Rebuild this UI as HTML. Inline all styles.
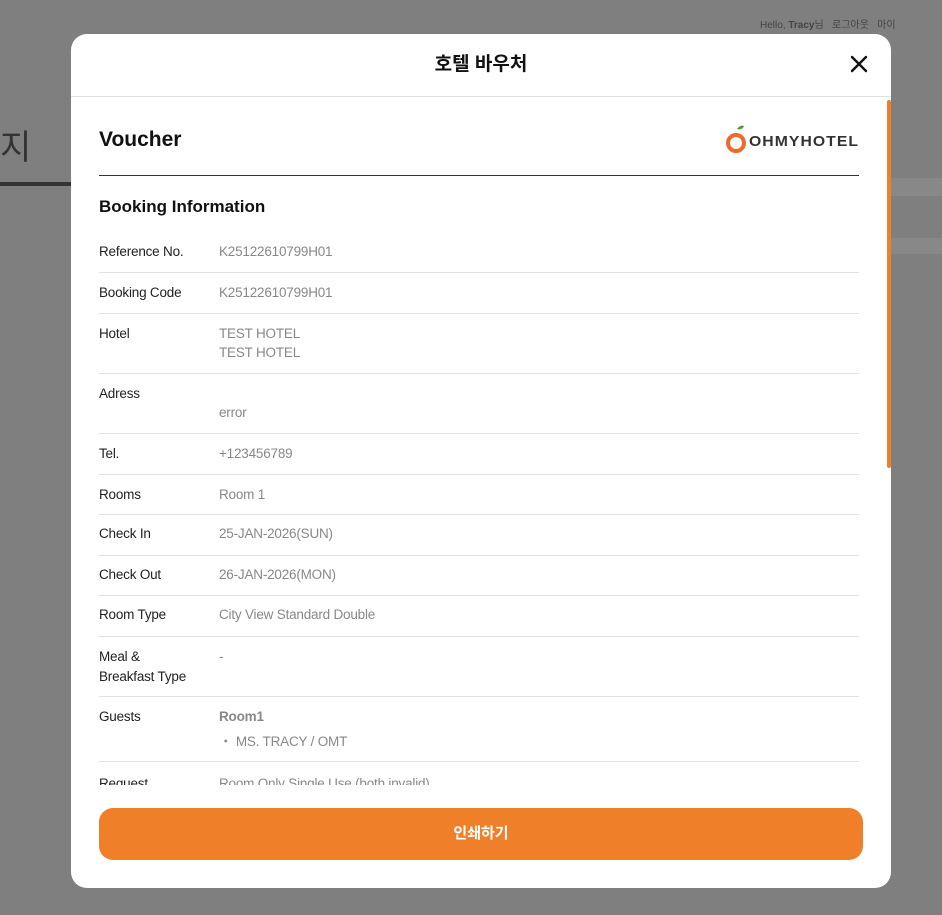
<!DOCTYPE html>
<html><head><meta charset="utf-8"><style>
*{margin:0;padding:0;box-sizing:border-box}
body{width:942px;height:915px;background:#7f7f7f;font-family:"Liberation Sans","Noto Sans CJK KR",sans-serif;position:relative;overflow:hidden}
.bg{position:absolute;background:#777}
.modal{position:absolute;left:71px;top:34px;width:820px;height:854px;background:#fff;border-radius:16px;overflow:hidden}
.hd{height:63px;border-bottom:1px solid #e0e0e0;text-align:center;font-size:19px;font-weight:bold;line-height:62px;color:#111}
.x{position:absolute;right:22px;top:20px;width:20px;height:20px}
.body{position:absolute;left:28px;top:63px;width:760px;height:688px;overflow:hidden}
h1{position:absolute;top:31px;font-size:21px;font-weight:bold;color:#111}
.rule{position:absolute;top:78px;left:0;width:760px;height:1px;background:#333}
h2{position:absolute;top:100px;font-size:17px;font-weight:bold;color:#111}
.row{position:absolute;left:0;width:760px;border-bottom:1px solid #e2e2e2;font-size:13.5px;letter-spacing:-0.2px}
.l{position:absolute;left:0;color:#222;line-height:20px;top:10px}
.v{position:absolute;left:120px;color:#888;line-height:19px}
.sb{position:absolute;left:816px;top:66px;width:4px;height:368px;background:#ef8029;border-radius:2px}
.btn{position:absolute;left:28px;top:774px;width:764px;height:52px;background:#ef8029;border-radius:14px;color:#fff;text-align:center;line-height:52px;font-weight:bold;font-size:15px}
</style></head><body>
<div style="position:absolute;left:760px;top:16px;font-size:10px;color:#444">Hello, <b>Tracy</b>님 &nbsp; 로그아웃 &nbsp; 마이</div>
<div style="position:absolute;left:0;top:120px;font-size:34px;color:#333">지</div>
<div class="bg" style="left:0;top:182px;width:71px;height:4px;background:#333"></div>
<div class="bg" style="left:891px;top:178px;width:51px;height:18px;background:#888"></div>
<div class="bg" style="left:891px;top:238px;width:51px;height:16px;background:#888"></div>
<div class="modal">
<div class="hd">호텔 바우처</div>
<svg class="x" viewBox="0 0 20 20"><path d="M3 3L17 17M17 3L3 17" stroke="#111" stroke-width="2.4" stroke-linecap="round"/></svg>
<div class="body">
<h1>Voucher</h1>
<div style="position:absolute;right:0;top:28px;width:134px;height:30px">
<svg width="26" height="30" viewBox="0 0 26 30" style="position:absolute;left:0;top:0"><path d="M12 4c2-3 5-4 7-3-1 3-4 4-7 3z" fill="#4a9a3a"/><circle cx="11" cy="18" r="8" fill="none" stroke="#ef6a2a" stroke-width="4"/></svg>
<span style="position:absolute;left:24px;top:8px;font-size:15px;font-weight:bold;letter-spacing:1px;color:#333;transform:scaleX(1.05);transform-origin:left">OHMYHOTEL</span>
</div>
<div class="rule"></div>
<h2>Booking Information</h2>
<div class="row" style="top:134px;height:42px"><span class="l" style="top:11px">Reference No.</span><span class="v" style="top:11px">K25122610799H01</span></div>
<div class="row" style="top:176px;height:41px"><span class="l">Booking Code</span><span class="v" style="top:10px">K25122610799H01</span></div>
<div class="row" style="top:217px;height:60px"><span class="l">Hotel</span><span class="v" style="top:10px">TEST HOTEL<br>TEST HOTEL</span></div>
<div class="row" style="top:277px;height:60px"><span class="l">Adress</span><span class="v" style="top:29px">error</span></div>
<div class="row" style="top:337px;height:41px"><span class="l">Tel.</span><span class="v" style="top:10px">+123456789</span></div>
<div class="row" style="top:378px;height:40px"><span class="l">Rooms</span><span class="v" style="top:10px">Room 1</span></div>
<div class="row" style="top:418px;height:41px"><span class="l" style="top:9px">Check In</span><span class="v" style="top:9px">25-JAN-2026(SUN)</span></div>
<div class="row" style="top:459px;height:40px"><span class="l" style="top:9px">Check Out</span><span class="v" style="top:9px">26-JAN-2026(MON)</span></div>
<div class="row" style="top:499px;height:41px"><span class="l" style="top:9px">Room Type</span><span class="v" style="top:9px">City View Standard Double</span></div>
<div class="row" style="top:540px;height:60px"><span class="l">Meal &amp;<br>Breakfast Type</span><span class="v" style="top:10px">-</span></div>
<div class="row" style="top:600px;height:65px"><span class="l">Guests</span><span class="v" style="top:10px;font-weight:bold">Room1</span><span class="v" style="top:35px">・ MS. TRACY / OMT</span></div>
<div class="row" style="top:665px;height:60px;border:none"><span class="l" style="top:12px">Request</span><span class="v" style="top:12px">Room Only Single Use (both invalid)</span></div>
</div>
<div class="sb"></div>
<div class="btn">인쇄하기</div>
</div>
</body></html>
